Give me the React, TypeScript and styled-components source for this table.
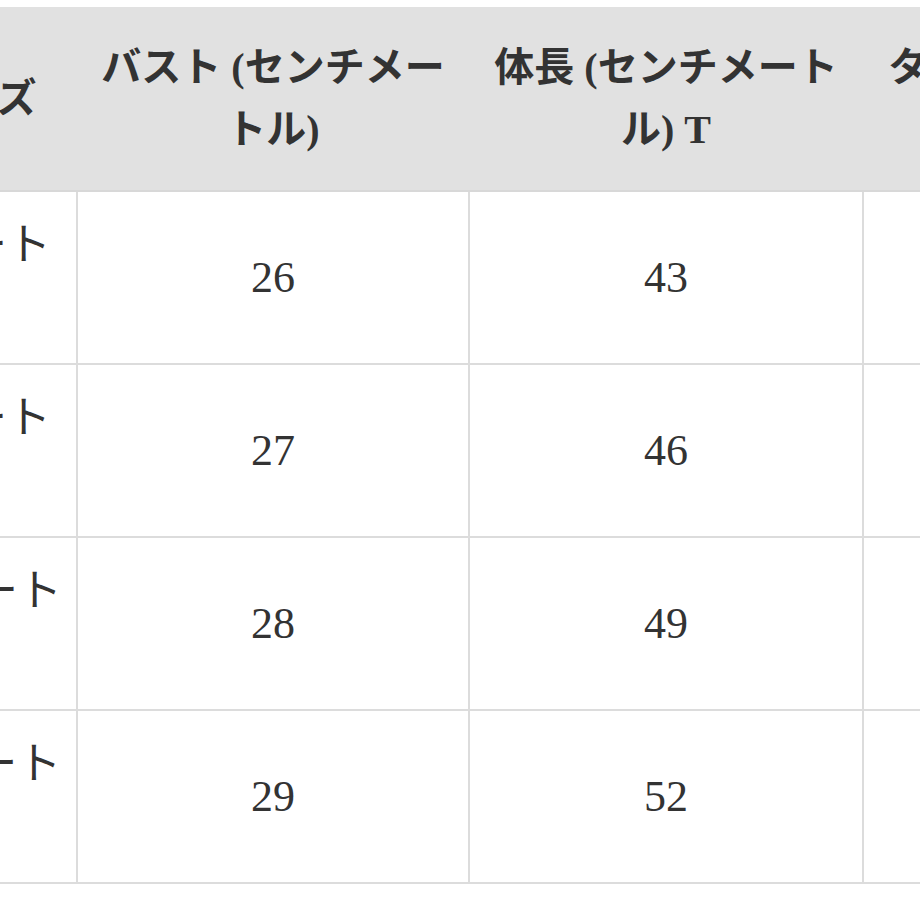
import React, { FC } from "react";
import styled, { createGlobalStyle } from "styled-components";

type SizeRow = {
  id: number;
  size: string;
  bust: number;
  length: number;
  tag: string;
};

const rows: SizeRow[] = [
  { id: 1, size: "80センチメートル", bust: 26, length: 43, tag: "80" },
  { id: 2, size: "90センチメートル", bust: 27, length: 46, tag: "90" },
  { id: 3, size: "100センチメートル", bust: 28, length: 49, tag: "100" },
  { id: 4, size: "110センチメートル", bust: 29, length: 52, tag: "110" },
];

const headers = [
  "キッズ服サイズ",
  "バスト (センチメートル)",
  "体長 (センチメートル) T",
  "タグサイズ (センチメートル)",
];

const widths = [360, 392, 394, 392];

const App: FC = () => {
  return (
    <>
      <GlobalStyle />
      <TableFrame>
        <SizeTable>
          <colgroup>
            {widths.map((w, i) => (
              <Col key={i} $width={w} />
            ))}
          </colgroup>
          <thead>
            <tr>
              {headers.map((title) => (
                <HeadCell key={title}>{title}</HeadCell>
              ))}
            </tr>
          </thead>
          <tbody>
            {rows.map((row) => (
              <tr key={row.id}>
                <Cell $narrow>{row.size}</Cell>
                <Cell>{row.bust}</Cell>
                <Cell>{row.length}</Cell>
                <Cell>{row.tag}</Cell>
              </tr>
            ))}
          </tbody>
        </SizeTable>
      </TableFrame>
    </>
  );
};

const GlobalStyle = createGlobalStyle`
  html, body {
    margin: 0;
    padding: 0;
    background: #ffffff;
  }
  body {
    font-family: "Liberation Serif", "Noto Sans CJK JP", serif;
    color: #333333;
  }
`;

const TableFrame = styled.div`
  width: 920px;
  height: 920px;
  overflow: hidden;
  padding-top: 7px;
  box-sizing: border-box;
`;

const SizeTable = styled.table`
  margin-left: -284px;
  width: 1538px;
  table-layout: fixed;
  border-collapse: collapse;
  font-family: "Liberation Serif", "Noto Sans CJK JP", serif;
  color: #333333;
`;

const Col = styled.col<{ $width: number }>`
  width: ${({ $width }) => $width}px;
`;

const HeadCell = styled.th`
  background-color: #e1e1e1;
  font-size: 40px;
  font-weight: 700;
  line-height: 62px;
  padding: 30px 20px 29px;
  text-align: center;
  vertical-align: middle;
  border-bottom: 2px solid #d8d8d8;
`;

const Cell = styled.td<{ $narrow?: boolean }>`
  font-size: 44px;
  font-weight: 400;
  line-height: 63px;
  padding: ${({ $narrow }) => ($narrow ? "22px 12px 23px" : "22px 20px 23px")};
  text-align: center;
  vertical-align: middle;
  border: 2px solid #dcdcdc;
  background-color: #ffffff;
`;

export default App;
